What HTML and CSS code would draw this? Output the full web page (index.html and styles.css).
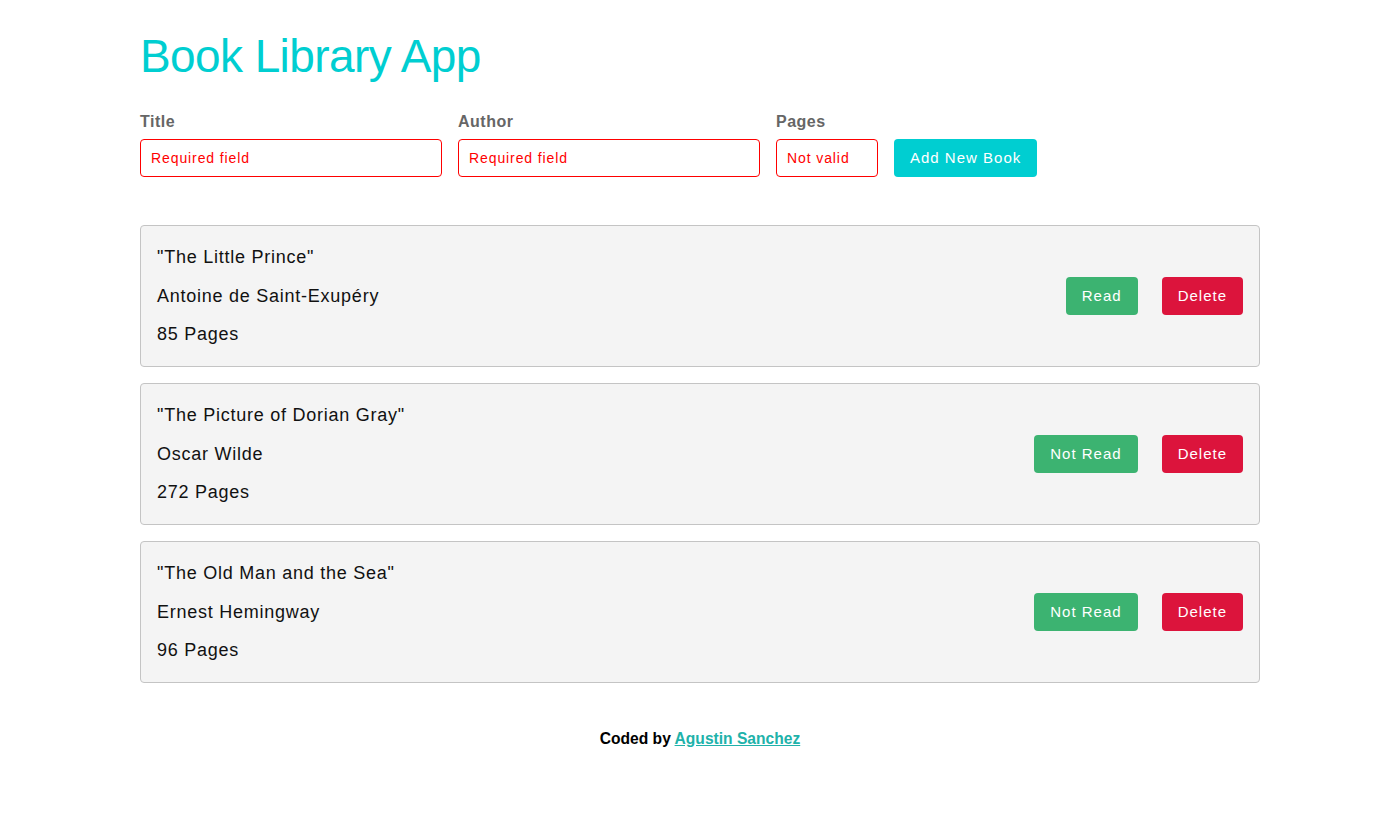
FILE: index.html
```html
<!DOCTYPE html>
<html lang="en">
<head>
<meta charset="utf-8">
<title>Book Library App</title>
<link rel="stylesheet" href="styles.css">
</head>
<body>
<div class="container">
  <h1 class="title">Book Library App</h1>
  <form class="book-form">
    <div class="field">
      <label class="label">Title</label>
      <input class="input input-wide" type="text" placeholder="Required field">
    </div>
    <div class="field">
      <label class="label">Author</label>
      <input class="input input-wide" type="text" placeholder="Required field">
    </div>
    <div class="field">
      <label class="label">Pages</label>
      <input class="input input-narrow" type="text" placeholder="Not valid">
    </div>
    <button type="button" class="btn btn-add">Add New Book</button>
  </form>

  <div class="books">
    <div class="card">
      <div class="info">
        <p class="line">"The Little Prince"</p>
        <p class="line">Antoine de Saint-Exupéry</p>
        <p class="line">85 Pages</p>
      </div>
      <div class="actions">
        <button type="button" class="btn btn-green">Read</button>
        <button type="button" class="btn btn-red">Delete</button>
      </div>
    </div>
    <div class="card">
      <div class="info">
        <p class="line">"The Picture of Dorian Gray"</p>
        <p class="line">Oscar Wilde</p>
        <p class="line">272 Pages</p>
      </div>
      <div class="actions">
        <button type="button" class="btn btn-green">Not Read</button>
        <button type="button" class="btn btn-red">Delete</button>
      </div>
    </div>
    <div class="card">
      <div class="info">
        <p class="line">"The Old Man and the Sea"</p>
        <p class="line">Ernest Hemingway</p>
        <p class="line">96 Pages</p>
      </div>
      <div class="actions">
        <button type="button" class="btn btn-green">Not Read</button>
        <button type="button" class="btn btn-red">Delete</button>
      </div>
    </div>
  </div>

  <footer class="footer">Coded by <a class="footer-link" href="#">Agustin Sanchez</a></footer>
</div>
</body>
</html>
```

FILE: styles.css
```css
* { box-sizing: border-box; }

body {
  margin: 0;
  background: #ffffff;
  font-family: "Liberation Sans", Arial, sans-serif;
  color: #111;
}

.container {
  width: 1120px;
  margin: 0 auto;
  padding-top: 29px;
}

.title {
  margin: 0 0 29px 0;
  font-size: 46px;
  font-weight: 400;
  letter-spacing: -0.6px;
  color: #00ced1;
  line-height: normal;
}

.book-form {
  display: flex;
  align-items: flex-end;
  gap: 16px;
}

.field {
  display: flex;
  flex-direction: column;
  gap: 8px;
}

.label {
  font-size: 16px;
  font-weight: 700;
  color: #666666;
  letter-spacing: 0.5px;
  line-height: 19px;
}

.input {
  height: 38px;
  border: 1px solid #ff0000;
  border-radius: 4px;
  padding: 0 10px;
  font-family: "Liberation Sans", Arial, sans-serif;
  font-size: 14px;
  letter-spacing: 0.9px;
  outline: none;
  background: #fff;
}

.input::placeholder { color: #ff0000; opacity: 1; }

.input-wide { width: 302px; }
.input-narrow { width: 102px; }

.btn {
  height: 38px;
  border: none;
  border-radius: 4px;
  padding: 0 16px 1px;
  font-family: "Liberation Sans", Arial, sans-serif;
  font-size: 15px;
  letter-spacing: 1px;
  color: #ffffff;
  cursor: pointer;
}

.btn-add { background: #00ced1; }
.btn-green { background: #3cb371; }
.btn-red { background: #dc143c; }

.books {
  margin-top: 48px;
  display: flex;
  flex-direction: column;
  gap: 16px;
}

.card {
  height: 142px;
  display: flex;
  align-items: center;
  justify-content: space-between;
  background: #f4f4f4;
  border: 1px solid #c4c4c4;
  border-radius: 4px;
  padding: 0 16px;
}

.info {
  display: flex;
  flex-direction: column;
  gap: 17.8px;
}

.line {
  margin: 0;
  font-size: 18px;
  letter-spacing: 0.75px;
  line-height: 20.7px;
  color: #111;
}

.actions {
  display: flex;
  gap: 24px;
}

.footer {
  margin-top: 47px;
  text-align: center;
  font-size: 15.6px;
  font-weight: 700;
  color: #000;
  line-height: 18px;
}

.footer-link {
  color: #20b2aa;
  text-decoration: underline;
}
```
